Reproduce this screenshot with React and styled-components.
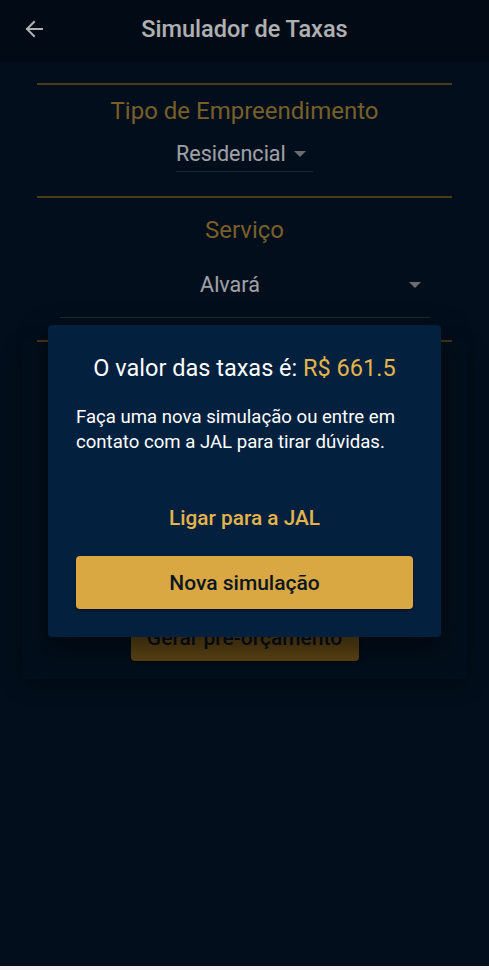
import styled, { createGlobalStyle } from 'styled-components';

const GlobalStyle = createGlobalStyle`
  html, body {
    margin: 0;
    padding: 0;
    background: #f2f2f2;
  }
  * { box-sizing: border-box; }
`

/** Whole phone screen */
const Screen = styled.div`
  position: relative;
  height: 966px;
  overflow: hidden;
  background: #031528;
  font-family: Roboto, "Noto Sans", sans-serif;
`

const Header = styled.header`
  display: flex;
  align-items: center;
  height: 62px;
  padding: 0 22px;
  background: #04111f;
  color: #fafcff;
`

const BackButton = styled.span`
  display: flex;
  width: 24px;
  height: 24px;
  margin-top: -4px;
`

const Title = styled.h1`
  flex: 1;
  margin: -4px 24px 0 0;
  font-size: 23.5px;
  font-weight: 500;
  text-align: center;
`

const Form = styled.div`
  display: flex;
  flex-direction: column;
  align-items: center;
  padding: 21px 37px 0;
`

const Divider = styled.div`
  align-self: stretch;
  height: 2px;
  background: #6a5728;
`

const FieldLabel = styled.div`
  margin-top: ${p => p.top}px;
  font-size: 24px;
  color: #a9893c;
  line-height: 30px;
`

/** fake select with underline */
const Select = styled.div`
  display: flex;
  align-items: center;
  width: ${p => p.width}px;
  height: ${p => p.height}px;
  padding-top: ${p => p.pad}px;
  margin-bottom: ${p => p.bottom}px;
  border-bottom: 1px solid #2b3947;
  color: #e2e7f0;
  font-size: 21.5px;
`

const SelectText = styled.span`
  flex: ${p => (p.wide ? 1 : 'none')};
  text-align: center;
  padding-right: ${p => (p.wide ? 8 : 0)}px;
`

const Caret = styled.span`
  width: 0;
  height: 0;
  margin: 0 ${p => p.right}px 0 ${p => p.left}px;
  border-left: 6px solid transparent;
  border-right: 6px solid transparent;
  border-top: 6px solid #9d9d9d;
`

const BackCard = styled.div`
  display: flex;
  justify-content: center;
  align-self: stretch;
  margin: 0 -15px;
  padding: 272px 0 18px;
  box-shadow: 0 6px 18px rgba(0, 0, 0, 0.35);
`

const GoldButton = styled.button`
  border: none;
  border-radius: 4px;
  font-family: inherit;
  font-size: 21px;
  font-weight: 500;
  color: #0a1624;
  cursor: pointer;
  background: ${p => (p.muted ? '#81611f' : '#d9a842')};
  width: ${p => p.width || 'auto'};
  height: ${p => p.height}px;
  padding: 0 12px;
  box-shadow: 0 2px 3px rgba(0, 0, 0, 0.35);
`

const Scrim = styled.div`
  position: absolute;
  inset: 0;
  display: flex;
  align-items: center;
  justify-content: center;
  padding-bottom: 4px;
  background: rgba(0, 0, 0, 0.3);
`

const Dialog = styled.div`
  width: 393px;
  padding: 28px 28px 28px;
  border-radius: 4px;
  background: #03203f;
  box-shadow: 0 10px 28px rgba(0, 0, 0, 0.5);
  color: #ffffff;
`

const DialogTitle = styled.h2`
  margin: 0;
  font-size: 23.5px;
  font-weight: 400;
  line-height: 30px;
  text-align: center;
`

const Amount = styled.span`
  color: #e3b44c;
`

const DialogText = styled.p`
  margin: 21.5px 0 0;
  font-size: 18.6px;
  line-height: 25px;
`

const LinkButton = styled.div`
  margin-top: 49.5px;
  font-size: 20.8px;
  font-weight: 500;
  line-height: 28px;
  text-align: center;
  color: #e3b44c;
`

const DialogActions = styled.div`
  margin-top: 24px;
`

function ArrowLeft() {
  return (
    <svg width="24" height="24" viewBox="0 0 24 24" fill="none" stroke="currentColor" strokeWidth="2" strokeLinecap="square">
      <path d="M20 12H5" />
      <path d="M12 5l-7 7 7 7" />
    </svg>
  )
}

export default function App() {
  return (
    <>
      <GlobalStyle />
      <Screen>
        <Header>
          <BackButton><ArrowLeft /></BackButton>
          <Title>Simulador de Taxas</Title>
        </Header>
        <Form>
          <Divider />
          <FieldLabel top={11}>Tipo de Empreendimento</FieldLabel>
          <Select width={137} height={46} pad={10} bottom={24}>
            <SelectText>Residencial</SelectText>
            <Caret left={8} right={0} />
          </Select>
          <Divider />
          <FieldLabel top={17}>Serviço</FieldLabel>
          <Select width={370} height={73} pad={7} bottom={22}>
            <SelectText wide>Alvará</SelectText>
            <Caret left={0} right={9} />
          </Select>
          <Divider />
          <BackCard>
            <GoldButton muted width="228px" height={47}>Gerar pré-orçamento</GoldButton>
          </BackCard>
        </Form>

        <Scrim>
          <Dialog>
            <DialogTitle>O valor das taxas é: <Amount>R$ 661.5</Amount></DialogTitle>
            <DialogText>
              Faça uma nova simulação ou entre em contato com a JAL para tirar dúvidas.
            </DialogText>
            <LinkButton>Ligar para a JAL</LinkButton>
            <DialogActions>
              <GoldButton width="100%" height={53}>Nova simulação</GoldButton>
            </DialogActions>
          </Dialog>
        </Scrim>
      </Screen>
    </>
  )
}
